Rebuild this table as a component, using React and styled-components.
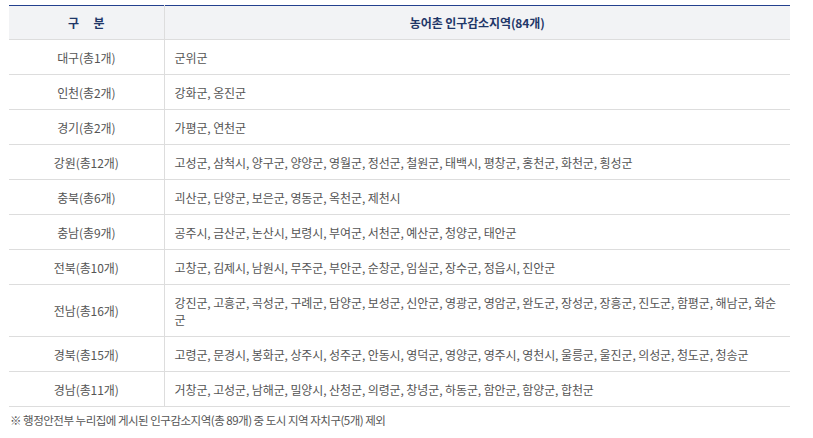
import React from "react";
import styled, { createGlobalStyle } from "styled-components";

const GlobalStyle = createGlobalStyle`
  html, body {
    margin: 0;
    padding: 0;
    background: #ffffff;
  }
  body {
    font-family: "Noto Sans CJK KR", "Noto Sans", sans-serif;
  }
`;

const Page = styled.div`
  padding: 5px 23px 0 9px;
`;

const Table = styled.table`
  width: 781px;
  border-collapse: collapse;
  border-top: 1px solid #23408e;
  font-size: 12px;
  letter-spacing: -0.1px;
  color: #555555;
`;

const HeadCell = styled.th`
  height: 34px;
  padding: 0 10px;
  background: #f2f3f5;
  color: #1f3768;
  font-weight: 700;
  text-align: center;
  border-bottom: 1px solid #dddddd;
  border-left: ${(props) => (props.$first ? "none" : "1px solid #dddddd")};
  width: ${(props) => (props.$first ? "155px" : "auto")};
  word-spacing: ${(props) => (props.$spaced ? "12px" : "normal")};
  box-sizing: border-box;
`;

const Cell = styled.td`
  padding: 8.5px 10px;
  line-height: 17px;
  font-weight: 400;
  text-align: ${(props) => (props.$center ? "center" : "left")};
  border-bottom: 1px solid #dddddd;
  border-left: ${(props) => (props.$center ? "none" : "1px solid #dddddd")};
  vertical-align: middle;
`;

const Note = styled.p`
  margin: 5px 0 0 1px;
  font-size: 11.5px;
  letter-spacing: -0.5px;
  line-height: 17px;
  color: #555555;
`;

const rows = [
  ["대구(총1개)", "군위군"],
  ["인천(총2개)", "강화군, 옹진군"],
  ["경기(총2개)", "가평군, 연천군"],
  [
    "강원(총12개)",
    "고성군, 삼척시, 양구군, 양양군, 영월군, 정선군, 철원군, 태백시, 평창군, 홍천군, 화천군, 횡성군",
  ],
  ["충북(총6개)", "괴산군, 단양군, 보은군, 영동군, 옥천군, 제천시"],
  [
    "충남(총9개)",
    "공주시, 금산군, 논산시, 보령시, 부여군, 서천군, 예산군, 청양군, 태안군",
  ],
  [
    "전북(총10개)",
    "고창군, 김제시, 남원시, 무주군, 부안군, 순창군, 임실군, 장수군, 정읍시, 진안군",
  ],
  [
    "전남(총16개)",
    "강진군, 고흥군, 곡성군, 구례군, 담양군, 보성군, 신안군, 영광군, 영암군, 완도군, 장성군, 장흥군, 진도군, 함평군, 해남군, 화순군",
  ],
  [
    "경북(총15개)",
    "고령군, 문경시, 봉화군, 상주시, 성주군, 안동시, 영덕군, 영양군, 영주시, 영천시, 울릉군, 울진군, 의성군, 청도군, 청송군",
  ],
  [
    "경남(총11개)",
    "거창군, 고성군, 남해군, 밀양시, 산청군, 의령군, 창녕군, 하동군, 함안군, 함양군, 합천군",
  ],
];

const App = () => {
  return (
    <>
      <GlobalStyle />
      <Page>
        <Table>
          <thead>
            <tr>
              <HeadCell $first $spaced>
                구 분
              </HeadCell>
              <HeadCell>농어촌 인구감소지역(84개)</HeadCell>
            </tr>
          </thead>
          <tbody>
            {rows.map(([area, list]) => (
              <tr key={area}>
                <Cell $center>{area}</Cell>
                <Cell>{list}</Cell>
              </tr>
            ))}
          </tbody>
        </Table>
        <Note>
          ※ 행정안전부 누리집에 게시된 인구감소지역(총 89개) 중 도시 지역
          자치구(5개) 제외
        </Note>
      </Page>
    </>
  );
};

export default App;
